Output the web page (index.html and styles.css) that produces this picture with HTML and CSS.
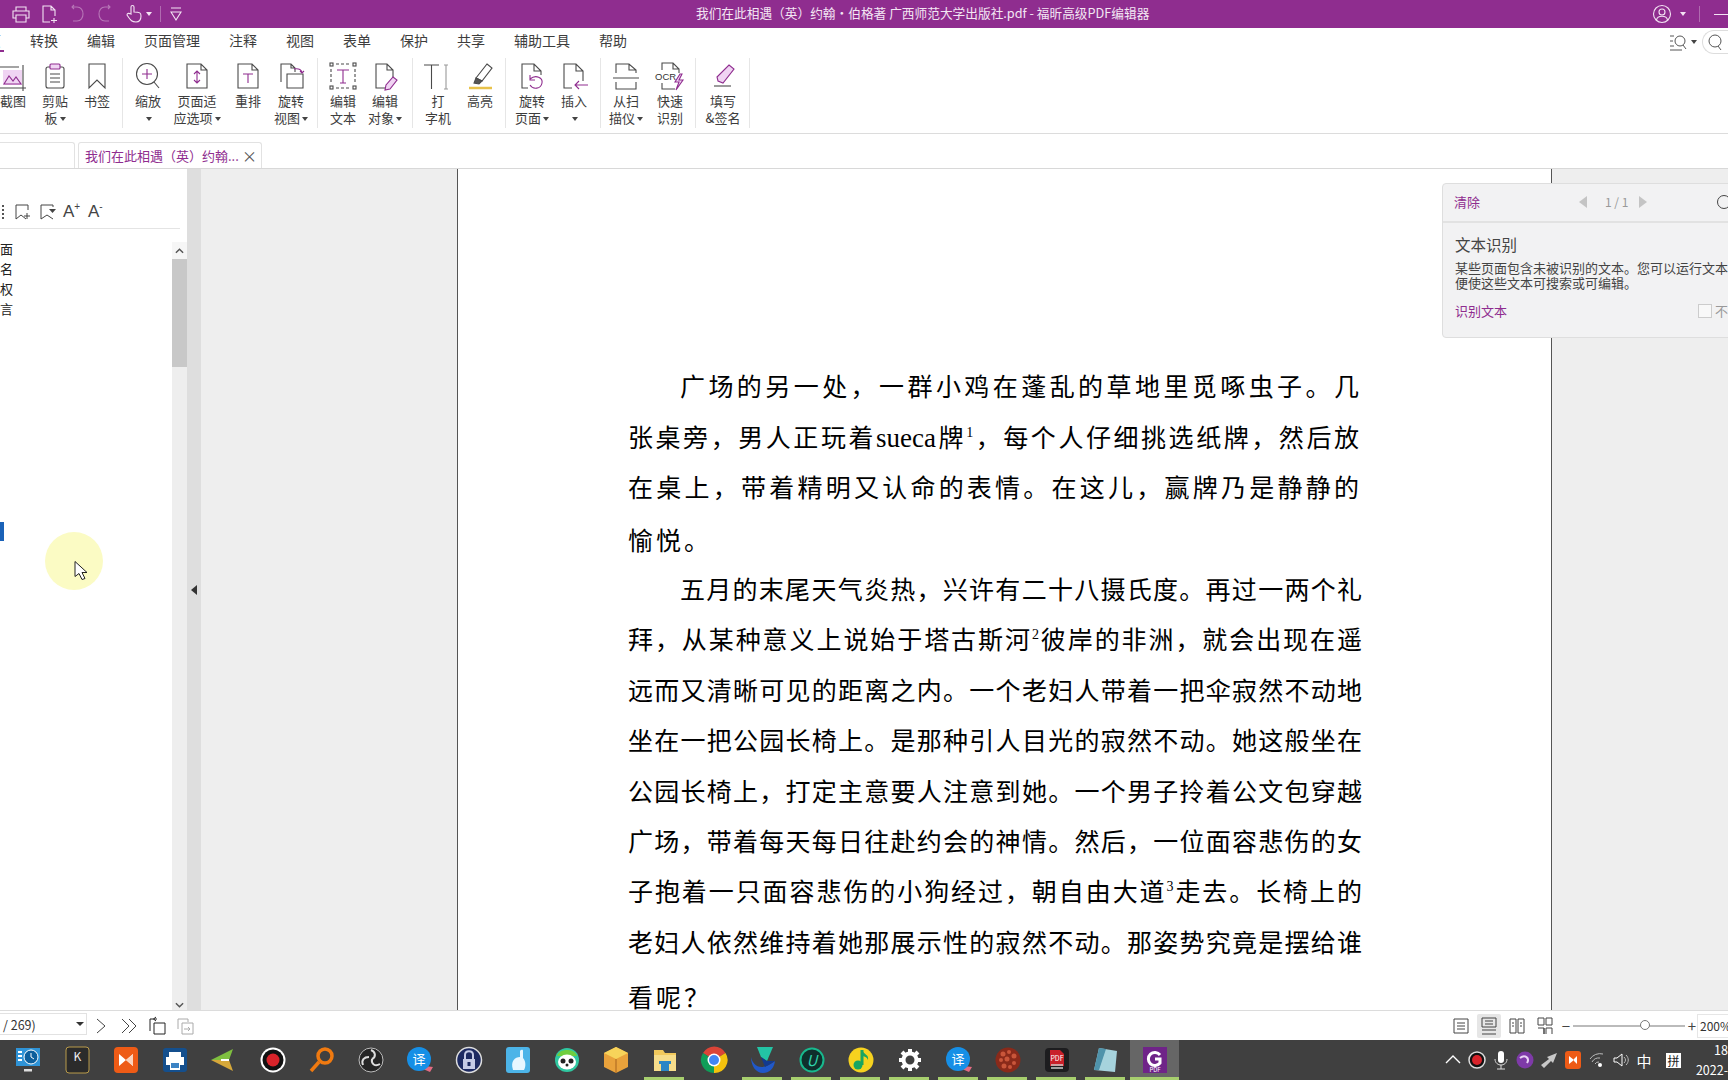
FILE: index.html
```html
<!DOCTYPE html>
<html lang="zh-CN">
<head>
<meta charset="utf-8">
<title>福昕高级PDF编辑器</title>
<link rel="stylesheet" href="styles.css">
</head>
<body>
<svg class="defs" aria-hidden="true">
  <symbol id="i-shot" viewBox="0 0 32 32"><path class="pf" d="M6 10h19v15H6z" stroke="none"/><path class="ps" d="M7 24l5-8 4 5 3-4 5 7z"/><path d="M1 28h28M26 5v26M1 7h21"/></symbol>
  <symbol id="i-clip" viewBox="0 0 32 32"><rect x="7" y="7" width="18" height="21" rx="2"/><rect class="pf ps" x="11" y="4" width="10" height="5" rx="1"/><path d="M11 14h10M11 18h10M11 22h10"/></symbol>
  <symbol id="i-mark" viewBox="0 0 32 32"><path d="M8 4h16v24l-8-8-8 8z"/></symbol>
  <symbol id="i-zoom" viewBox="0 0 32 32"><circle cx="15" cy="14" r="10.5"/><path d="M22 22l5 6"/><path class="ps" d="M15 9v10M10 14h10"/></symbol>
  <symbol id="i-fit" viewBox="0 0 32 32"><path d="M6 4h14l6 6v18H6zM20 4v6h6"/><path class="ps" d="M16 11v12M13 14l3-3 3 3M13 20l3 3 3-3"/></symbol>
  <symbol id="i-reflow" viewBox="0 0 32 32"><path d="M6 4h14l6 6v18H6zM20 4v6h6"/><path class="ps" d="M11 14h10M16 14v9"/></symbol>
  <symbol id="i-rotview" viewBox="0 0 32 32"><path d="M6 22V4h10l4 4v4M16 4v4h4"/><path d="M12 14h16v14H12z"/><path class="ps" d="M19 9c5-1 8 1 8 4M25 11l2 2 2-2"/></symbol>
  <symbol id="i-edittext" viewBox="0 0 32 32"><path d="M9 4h14M9 28h14M4 9v14M28 9v14" stroke-dasharray="3 2"/><rect x="3" y="3" width="3" height="3"/><rect x="26" y="3" width="3" height="3"/><rect x="3" y="26" width="3" height="3"/><rect x="26" y="26" width="3" height="3"/><path class="ps" d="M10 10h12M16 10v13M13 23h6"/></symbol>
  <symbol id="i-editobj" viewBox="0 0 32 32"><path d="M19 28H7V4h11l6 6v7M18 4v6h6"/><path class="pf ps" d="M24 17l4 3-7 9-5 1 1-5z"/></symbol>
  <symbol id="i-type" viewBox="0 0 32 32"><path d="M2 5h15M9.500 5v24"/><path class="soft" d="M24 5v24M22 5h4M22 29h4"/></symbol>
  <symbol id="i-high" viewBox="0 0 32 32"><path d="M23 4l5 4-10 13-6-3z"/><path class="dark" d="M12 18l6 3-3 3-5-1z"/><path class="yel" d="M5 28h23"/></symbol>
  <symbol id="i-rotpage" viewBox="0 0 32 32"><path d="M12 28H6V4h12l7 7v4M18 4v7h7"/><path class="ps" d="M14 19c6-5 13-1 12 4-1 6-9 7-12 2M14 15v5h5"/></symbol>
  <symbol id="i-insert" viewBox="0 0 32 32"><path d="M14 28H6V4h12l7 7v10M18 4v7h7"/><path class="ps" d="M30 25H17M21 21l-4 4 4 4"/></symbol>
  <symbol id="i-scan" viewBox="0 0 32 32"><path d="M6 13V4h13l7 6v3M19 4v6h7M3 18h26M6 22v7h20v-7"/></symbol>
  <symbol id="i-ocr" viewBox="0 0 32 32"><path d="M8 10V3h11l6 6v4M19 3v6h6M8 23v6h13"/><text class="ocr-text" x="1" y="20">OCR</text><path class="pf ps" d="M26 14l-5 8h4l-3 8 7-10h-4l3-6z"/></symbol>
  <symbol id="i-sign" viewBox="0 0 32 32"><path class="pf ps" d="M22 5l5 4-11 14-5-2-1-4z"/><path d="M7 26h17"/></symbol>
  <symbol id="s-bm-add" viewBox="0 0 20 20"><path d="M13 17l-5-4-5 4V3h12v5M14 11v6M11 14h6"/></symbol>
  <symbol id="s-bm-down" viewBox="0 0 20 20"><path d="M15 17l-6-4-6 4V3h12v2"/><path class="solid" d="M11 7h7l-3.500 4z"/></symbol>
</svg>

<div class="app">
  <header class="titlebar">
    <div class="quick">
      <svg class="qi" viewBox="0 0 20 20"><path d="M5 7V3h10v4M5 14H2V7h16v7h-3M5 11h10v7H5z"/></svg>
      <svg class="qi" viewBox="0 0 20 20"><path d="M11 18H4V2h8l4 4v6M12 2v4h4M15 14v5M12 16.500h6"/></svg>
      <svg class="qi qi-off" viewBox="0 0 20 20"><path d="M5 3h5c8 0 8 14 0 14H6M7 1L5 3l2 2"/></svg>
      <svg class="qi qi-off" viewBox="0 0 20 20"><path d="M15 3h-5c-8 0-8 14 0 14h4M13 1l2 2-2 2"/></svg>
      <svg class="qi" viewBox="0 0 20 20"><path d="M8 10V3c0-2 3-2 3 0v5c6 0 7 1 7 4 0 5-2 6-5 6-4 0-5-1-9-7 0-2 2-2 4-1z"/></svg>
      <i class="caret caret-white"></i>
      <span class="qsep"></span>
      <svg class="qi qi-drop" viewBox="0 0 20 20"><path d="M5 4h10M5 8l5 8 5-8z"/></svg>
    </div>
    <div class="wintitle">我们在此相遇（英）约翰·伯格著 广西师范大学出版社.pdf - 福昕高级PDF编辑器</div>
    <div class="winctl">
      <svg class="qi qi-user" viewBox="0 0 20 20"><circle cx="10" cy="10" r="8.500"/><circle cx="10" cy="8" r="3"/><path d="M4.500 16c1-5 10-5 11 0"/></svg>
      <i class="caret caret-white"></i>
      <span class="qsep qsep-right"></span>
      <span class="minbar"></span>
    </div>
  </header>

  <nav class="menu">
    <span class="menu-home">主页</span>
    <span>转换</span><span>编辑</span><span>页面管理</span><span>注释</span><span>视图</span><span>表单</span><span>保护</span><span>共享</span><span>辅助工具</span><span>帮助</span>
    <div class="menu-search">
      <svg class="find" viewBox="0 0 20 20"><path d="M1 4h4M1 9h3M1 14h4M1 18h12"/><circle cx="11" cy="9" r="5"/><path d="M14 13l3 4"/></svg>
      <i class="caret"></i>
      <div class="pill"><svg class="find" viewBox="0 0 20 20"><circle cx="10" cy="9" r="6"/><path d="M13 14l3 4"/></svg></div>
    </div>
  </nav>

  <section class="ribbon">
    <div class="group g1">
      <div class="tool"><svg class="ico"><use href="#i-shot"/></svg><span class="label">截图</span></div>
      <div class="tool"><svg class="ico"><use href="#i-clip"/></svg><span class="label">剪贴<br>板<i class="caret"></i></span></div>
      <div class="tool"><svg class="ico"><use href="#i-mark"/></svg><span class="label">书签</span></div>
    </div>
    <div class="group g2">
      <div class="tool"><svg class="ico"><use href="#i-zoom"/></svg><span class="label">缩放<br><i class="caret"></i></span></div>
      <div class="tool"><svg class="ico"><use href="#i-fit"/></svg><span class="label">页面适<br>应选项<i class="caret"></i></span></div>
      <div class="tool"><svg class="ico"><use href="#i-reflow"/></svg><span class="label">重排</span></div>
      <div class="tool"><svg class="ico"><use href="#i-rotview"/></svg><span class="label">旋转<br>视图<i class="caret"></i></span></div>
    </div>
    <div class="group g3">
      <div class="tool"><svg class="ico"><use href="#i-edittext"/></svg><span class="label">编辑<br>文本</span></div>
      <div class="tool"><svg class="ico"><use href="#i-editobj"/></svg><span class="label">编辑<br>对象<i class="caret"></i></span></div>
    </div>
    <div class="group g4">
      <div class="tool"><svg class="ico"><use href="#i-type"/></svg><span class="label">打<br>字机</span></div>
      <div class="tool"><svg class="ico"><use href="#i-high"/></svg><span class="label">高亮</span></div>
    </div>
    <div class="group g5">
      <div class="tool"><svg class="ico"><use href="#i-rotpage"/></svg><span class="label">旋转<br>页面<i class="caret"></i></span></div>
      <div class="tool"><svg class="ico"><use href="#i-insert"/></svg><span class="label">插入<br><i class="caret"></i></span></div>
    </div>
    <div class="group g6">
      <div class="tool"><svg class="ico"><use href="#i-scan"/></svg><span class="label">从扫<br>描仪<i class="caret"></i></span></div>
      <div class="tool"><svg class="ico"><use href="#i-ocr"/></svg><span class="label">快速<br>识别</span></div>
    </div>
    <div class="group g7">
      <div class="tool"><svg class="ico"><use href="#i-sign"/></svg><span class="label">填写<br>&amp;签名</span></div>
    </div>
  </section>

  <div class="tabs">
    <div class="tab tab-prev"></div>
    <div class="tab tab-active"><span>我们在此相遇（英）约翰...</span><span class="tab-x">×</span></div>
  </div>

  <main class="main">
    <aside class="sidebar">
      <div class="side-tools">
        <span class="side-cut"></span>
        <svg class="sico"><use href="#s-bm-add"/></svg>
        <svg class="sico"><use href="#s-bm-down"/></svg>
        <span class="font-btn">A<sup>+</sup></span>
        <span class="font-btn">A<sup>-</sup></span>
      </div>
      <div class="side-body">
        <div class="tree">
          <div class="tree-row">面</div>
          <div class="tree-row">名</div>
          <div class="tree-row">权</div>
          <div class="tree-row">言</div>
          <div class="tree-mark"></div>
        </div>
        <div class="scroll">
          <div class="scroll-btn">
            <svg class="chev" viewBox="0 0 10 6"><path d="M1 5l4-4 4 4"/></svg>
          </div>
          <div class="scroll-thumb"></div>
          <div class="scroll-track"></div>
          <div class="scroll-btn scroll-btn-end">
            <svg class="chev" viewBox="0 0 10 6"><path d="M1 1l4 4 4-4"/></svg>
          </div>
        </div>
      </div>
      <div class="pointer-glow"></div>
      <svg class="pointer" viewBox="0 0 14 20"><path d="M1 1v15l4-3 3 6 3-1-3-6h5z"/></svg>
    </aside>
    <div class="collapse"><i class="collapse-arrow"></i></div>
    <div class="gutter"></div>
    <article class="page">
      <div class="para">
        <p class="line indent">广场的另一处，一群小鸡在蓬乱的草地里觅啄虫子。几</p>
        <p class="line">张桌旁，男人正玩着<span class="latin">sueca</span>牌<sup class="note">1</sup>，每个人仔细挑选纸牌，然后放</p>
        <p class="line">在桌上，带着精明又认命的表情。在这儿，赢牌乃是静静的</p>
        <p class="line line-end drop-3">愉悦。</p>
      </div>
      <div class="para para-wide">
        <p class="line indent">五月的末尾天气炎热，兴许有二十八摄氏度。再过一两个礼</p>
        <p class="line">拜，从某种意义上说始于塔古斯河<sup class="note">2</sup>彼岸的非洲，就会出现在遥</p>
        <p class="line">远而又清晰可见的距离之内。一个老妇人带着一把伞寂然不动地</p>
        <p class="line">坐在一把公园长椅上。是那种引人目光的寂然不动。她这般坐在</p>
        <p class="line">公园长椅上，打定主意要人注意到她。一个男子拎着公文包穿越</p>
        <p class="line">广场，带着每天每日往赴约会的神情。然后，一位面容悲伤的女</p>
        <p class="line">子抱着一只面容悲伤的小狗经过，朝自由大道<sup class="note">3</sup>走去。长椅上的</p>
        <p class="line">老妇人依然维持着她那展示性的寂然不动。那姿势究竟是摆给谁</p>
        <p class="line line-end drop-5">看呢？</p>
      </div>
    </article>
    <div class="outside"></div>
    <div class="notice">
      <div class="notice-head">
        <span class="link">清除</span>
        <i class="tri tri-l"></i>
        <span class="count">1 / 1</span>
        <i class="tri tri-r"></i>
        <span class="notice-close"></span>
      </div>
      <div class="notice-body">
        <h3 class="notice-title">文本识别</h3>
        <p class="notice-text">某些页面包含未被识别的文本。您可以运行文本识别，<br>便使这些文本可搜索或可编辑。</p>
        <div class="notice-foot">
          <span class="link">识别文本</span>
          <span class="check-box"></span><span class="check-text">不再显示</span>
        </div>
      </div>
    </div>
  </main>

  <footer class="status">
    <div class="pagebox"><span>/ 269)</span><i class="caret caret-dark"></i></div>
    <svg class="nav nav-next" viewBox="0 0 20 20"><path d="M6 3l8 7-8 7"/></svg>
    <svg class="nav" viewBox="0 0 20 20"><path d="M3 3l7 7-7 7M10 3l7 7-7 7"/></svg>
    <svg class="nav nav-big" viewBox="0 0 20 20"><path d="M2 15V3h7M8 1L5.500 3 8 5M6 7h11v11H6z"/></svg>
    <svg class="nav nav-off" viewBox="0 0 20 20"><path d="M2 13V3h10v3M6 7h11v11H6zM8 13h6M12 11l2 2-2 2"/></svg>
    <div class="views">
      <span class="view"><svg class="vico" viewBox="0 0 18 18"><path d="M2 2h14v14H2zM5 6h8M5 9h8M5 12h8"/></svg></span>
      <span class="view view-on"><svg class="vico" viewBox="0 0 18 18"><path d="M2 1h14v9H2zM5 4h8M5 7h8M2 13h14M2 17h14"/></svg></span>
      <span class="view"><svg class="vico" viewBox="0 0 18 18"><path d="M2 2h6v14H2zM10 2h6v14h-6zM4 6h2M4 9h2M12 6h2M12 9h2"/></svg></span>
      <span class="view"><svg class="vico" viewBox="0 0 18 18"><path d="M2 1h6v7H2zM10 1h6v7h-6zM2 11h6v6M8 11v6M10 11h6M10 11v6M16 11v6"/></svg></span>
    </div>
    <div class="zoomer">
      <span class="zoom-sign">−</span>
      <div class="slider"><span class="knob"></span></div>
      <span class="zoom-sign">+</span>
      <span class="zoom-value">200%</span>
    </div>
  </footer>

  <div class="taskbar">
    <div class="apps">
      <div class="app-item"><svg class="tb" viewBox="0 0 28 28"><rect x="2" y="2" width="24" height="18" fill="#2f93d6"/><circle cx="17" cy="11" r="7" fill="#0d5f9c" stroke="#fff"/><path d="M17 7v4l3 2" stroke="#fff" fill="none"/><path d="M4 6h4M4 10h4M4 14h4" stroke="#fff" stroke-width="2"/><rect x="10" y="23" width="8" height="2.500" fill="#ddd"/></svg></div>
      <div class="app-item"><svg class="tb" viewBox="0 0 28 28"><rect x="3" y="1" width="23" height="26" rx="3" fill="#2b2b2b" stroke="#b99b4b"/><text class="tb-text" x="14.500" y="15" fill="#eee" text-anchor="middle" font-size="12">K</text></svg></div>
      <div class="app-item"><svg class="tb" viewBox="0 0 28 28"><rect x="2" y="1" width="24" height="26" rx="4" fill="#ee5b16"/><path d="M7 8l7 6-7 6zM21 8l-7 6 7 6z" fill="#fff"/><path d="M21 8l-7 6 7 6z" fill="#fbd2bb"/></svg></div>
      <div class="app-item"><svg class="tb" viewBox="0 0 28 28"><rect x="2" y="2" width="24" height="24" rx="3" fill="#144f8d"/><path d="M8 6h12v5H8zM5 11h18v8h-4v5H9v-5H5z" fill="#fff"/><path d="M10 17h8v5h-8z" fill="#3b83c4"/></svg></div>
      <div class="app-item"><svg class="tb" viewBox="0 0 28 28"><path d="M1 14L23 3l-4 11z" fill="#7fbf3f"/><path d="M1 14l22 11-4-11z" fill="#d6a83a"/><path d="M11 14h8" stroke="#fff" stroke-width="2"/></svg></div>
      <div class="app-item"><svg class="tb" viewBox="0 0 28 28"><circle cx="14" cy="14" r="12.500" fill="#fff"/><circle cx="14" cy="14" r="10.500" fill="#111"/><circle cx="14" cy="14" r="6.500" fill="#d8232a"/></svg></div>
      <div class="app-item"><svg class="tb" viewBox="0 0 28 28"><circle cx="17" cy="10" r="7" fill="none" stroke="#f07a10" stroke-width="3.500"/><path d="M11 16l-8 9" stroke="#f07a10" stroke-width="3.500"/></svg></div>
      <div class="app-item"><svg class="tb" viewBox="0 0 28 28"><circle cx="14" cy="14" r="12" fill="#252525" stroke="#bbb"/><path d="M14 4c5 2 5 7 1 9M23 18c-5 3-9 0-8-5M6 19c-2-5 1-8 6-8" fill="none" stroke="#ddd" stroke-width="2"/></svg></div>
      <div class="app-item"><svg class="tb" viewBox="0 0 28 28"><path d="M19 20l8 1-3 5-7-3z" fill="#e46b82"/><circle cx="13" cy="13" r="12" fill="#168fe6"/><text class="tb-text" x="13" y="18" fill="#fff" text-anchor="middle" font-size="13">译</text></svg></div>
      <div class="app-item"><svg class="tb" viewBox="0 0 28 28"><circle cx="14" cy="14" r="12.500" fill="#1d2a62" stroke="#ddd" stroke-width="1.500"/><rect x="8" y="13" width="12" height="10" fill="#c5cbe6"/><path d="M10 13V9c0-5 8-5 8 0v4" fill="none" stroke="#c5cbe6" stroke-width="2"/><rect x="12.500" y="16" width="3" height="4" fill="#1d2a62"/></svg></div>
      <div class="app-item"><svg class="tb" viewBox="0 0 28 28"><rect x="2" y="1" width="24" height="26" rx="3" fill="#4cb4e8"/><path d="M9 24c-3-9 2-13 7-13V5c2-2 3-1 3 0v7c3 3 3 9 1 12z" fill="#e8f7ff"/></svg></div>
      <div class="app-item"><svg class="tb" viewBox="0 0 28 28"><circle cx="14" cy="14" r="12" fill="#2fc7a0"/><path d="M4 10C6 2 22 2 24 10z" fill="#6fcf3f"/><ellipse cx="14" cy="16" rx="9" ry="7.500" fill="#fff"/><circle cx="10" cy="15" r="2.500" fill="#222"/><circle cx="18" cy="15" r="2.500" fill="#222"/><circle cx="14" cy="19" r="1.500" fill="#222"/></svg></div>
      <div class="app-item"><svg class="tb" viewBox="0 0 28 28"><path d="M14 1l12 6v14l-12 6-12-6V7z" fill="#e9a23b"/><path d="M2 7l12 6 12-6-12-6z" fill="#f7d35a"/><path d="M14 13v14" stroke="#a8651f"/></svg></div>
      <div class="app-item run"><svg class="tb" viewBox="0 0 28 28"><path d="M3 4h9l2 3h11v18H3z" fill="#f2c95c"/><path d="M3 9h22v16H3z" fill="#f7dd8a"/><path d="M10 18h8v7h-8z" fill="#2b86c5"/><path d="M8 15h12v3H8z" fill="#2b86c5"/></svg></div>
      <div class="app-item"><svg class="tb" viewBox="0 0 28 28"><path d="M14 14L3 7a13 13 0 0 1 22.500 0z" fill="#db4437"/><path d="M14 14l11.500-7A13 13 0 0 1 14 27z" fill="#f4c20d"/><path d="M14 27A13 13 0 0 1 3 7l11 7z" fill="#0f9d58"/><circle cx="14" cy="14" r="6.500" fill="#fff"/><circle cx="14" cy="14" r="5" fill="#4285f4"/></svg></div>
      <div class="app-item run"><svg class="tb" viewBox="0 0 28 28"><path d="M2 11c2 9 10 15 24 4-1 8-6 12-12 12C7 27 2 20 2 11z" fill="#2058c9"/><path d="M8 1h16l-6 14-6-4z" fill="#23c4a5"/><path d="M12 11l6 4 8 0-10 6z" fill="#123a8f"/></svg></div>
      <div class="app-item run"><svg class="tb" viewBox="0 0 28 28"><circle cx="14" cy="14" r="11.500" fill="#0f2f2c" stroke="#18b98e" stroke-width="2"/><text class="tb-text tb-italic" x="14" y="19.500" fill="#2fd3aa" text-anchor="middle" font-size="15">U</text></svg></div>
      <div class="app-item run"><svg class="tb" viewBox="0 0 28 28"><circle cx="14" cy="14" r="12.500" fill="#f6d21f"/><path d="M15 4v15" stroke="#19a561" stroke-width="3"/><circle cx="11" cy="19" r="4.500" fill="#19a561"/><path d="M15 4c2 5 7 4 6 10-1-3-4-4-6-4z" fill="#19a561"/></svg></div>
      <div class="app-item run"><svg class="tb" viewBox="0 0 28 28"><circle cx="14" cy="14" r="6.500" fill="none" stroke="#fff" stroke-width="4"/><path d="M14 3v5M14 20v5M3 14h5M20 14h5M6 6l3.500 3.500M18.500 18.500L22 22M22 6l-3.500 3.500M9.500 18.500L6 22" stroke="#fff" stroke-width="4"/></svg></div>
      <div class="app-item run"><svg class="tb" viewBox="0 0 28 28"><path d="M19 20l8 1-3 5-7-3z" fill="#e46b82"/><circle cx="13" cy="13" r="12" fill="#168fe6"/><text class="tb-text" x="13" y="18" fill="#fff" text-anchor="middle" font-size="13">译</text></svg></div>
      <div class="app-item run"><svg class="tb" viewBox="0 0 28 28"><circle cx="14" cy="14" r="12.500" fill="#8a2a1a"/><g fill="#c9563a"><circle cx="9" cy="8" r="2.500"/><circle cx="15" cy="6" r="2"/><circle cx="20" cy="10" r="2.500"/><circle cx="7" cy="14" r="2"/><circle cx="13" cy="13" r="2.500"/><circle cx="20" cy="17" r="2"/><circle cx="10" cy="20" r="2.500"/><circle cx="16" cy="21" r="2"/></g></svg></div>
      <div class="app-item run"><svg class="tb" viewBox="0 0 28 28"><rect x="2" y="2" width="24" height="24" rx="4" fill="#1d1d1f"/><path d="M7 4h10l4 4v12H7z" fill="#c8202a"/><text class="tb-text" x="14" y="15" fill="#fff" text-anchor="middle" font-size="7">PDF</text><path d="M8 19h12M8 22h12" stroke="#ccc" stroke-width="1.500"/></svg></div>
      <div class="app-item run"><svg class="tb" viewBox="0 0 28 28"><path d="M7 2l18 3-2 21-21-2z" fill="#a6d3dd"/><path d="M7 2l7 1-7 21-5 0z" fill="#4f93ab"/></svg></div>
      <div class="app-item run app-active"><svg class="tb" viewBox="0 0 28 28"><rect x="2" y="1" width="24" height="26" fill="#6f2488"/><path d="M19 9a6.500 6.500 0 1 0 0 8v-4h-5" fill="none" stroke="#fff" stroke-width="3"/><text class="tb-text" x="14" y="26" fill="#fff" text-anchor="middle" font-size="6">PDF</text></svg></div>
    </div>
    <div class="tray">
      <svg class="tr" viewBox="0 0 20 20"><path d="M3 13l7-7 7 7" fill="none" stroke="#fff" stroke-width="1.400"/></svg>
      <svg class="tr" viewBox="0 0 20 20"><circle cx="10" cy="10" r="8" fill="#111" stroke="#ddd" stroke-width="1.500"/><circle cx="10" cy="10" r="5" fill="#d8232a"/></svg>
      <svg class="tr" viewBox="0 0 20 20"><rect x="7" y="1" width="6" height="12" rx="3" fill="#fff"/><path d="M4 9c0 8 12 8 12 0M10 15v4M6 19h8" fill="none" stroke="#ddd"/></svg>
      <svg class="tr" viewBox="0 0 20 20"><circle cx="10" cy="10" r="8.500" fill="#7e3aa8"/><path d="M5 8c5-4 10 0 7 5" fill="none" stroke="#e9d3f5" stroke-width="2"/></svg>
      <svg class="tr" viewBox="0 0 20 20"><path d="M18 3L8 7l2 2-8 6 3 3 7-7 2 2z" fill="#c8c8c8"/></svg>
      <svg class="tr" viewBox="0 0 20 20"><rect x="2" y="1" width="16" height="18" rx="3" fill="#ee5b16"/><path d="M6 6l5 4-5 4zM14 6l-4 4 4 4z" fill="#fff"/></svg>
      <svg class="tr" viewBox="0 0 20 20"><g fill="none" stroke="#bbb"><path d="M3 9a12 12 0 0 1 13-5M5 12a8 8 0 0 1 8-4M8 14a4 4 0 0 1 4-2"/></g><circle cx="13" cy="15" r="2" fill="#fff"/></svg>
      <svg class="tr" viewBox="0 0 20 20"><path d="M3 8h3l5-4v12l-5-4H3z" fill="none" stroke="#fff"/><path d="M13 7c2 2 2 4 0 6M15 5c3 3 3 7 0 10" fill="none" stroke="#bbb"/></svg>
      <span class="ime">中</span>
      <span class="pinyin">拼</span>
      <div class="clock"><span>18</span><span>2022-</span></div>
    </div>
  </div>
</div>
</body>
</html>
```
FILE: styles.css
```css
* { box-sizing: border-box; }
html, body { margin: 0; height: 100%; overflow: hidden; background: #fff; }
body { font-family: "Noto Sans CJK SC", "Noto Sans", sans-serif; color: #333; }
p, h3 { margin: 0; font-weight: 400; }
i { font-style: normal; }
.defs { position: absolute; width: 0; height: 0; }

.app { display: grid; grid-template-rows: 28px 28px 78px 35px 841px 30px 40px; width: 1728px; height: 1080px; overflow: hidden; }

/* title bar */
.titlebar { display: flex; align-items: center; background: #8f2d8f; color: #f3e6f3; padding-left: 11px; overflow: hidden; }
.quick { display: flex; align-items: center; gap: 8px; }
.qi { width: 20px; height: 20px; fill: none; stroke: #f3e3f3; stroke-width: 1.1; flex: none; }
.qi-off { opacity: .4; }
.qi-drop { margin-left: -3px; }
.caret { display: inline-block; width: 0; height: 0; border-left: 3px solid transparent; border-right: 3px solid transparent; border-top: 4px solid #444; margin-left: 2px; vertical-align: middle; }
.caret-white { border-top-color: #f3e3f3; margin-left: -5px; }
.qsep { width: 1px; height: 16px; background: #b06bb0; margin-left: 0; }
.wintitle { margin-left: 510px; padding-bottom: 3px; font-size: 12.7px; white-space: nowrap; }
.winctl { display: flex; align-items: center; margin-left: auto; gap: 9px; padding-right: 0; width: 76px; flex: none; }
.winctl .caret-white { margin-left: -1px; }
.qsep-right { margin-left: 4px; }
.minbar { width: 14px; height: 1px; background: #f3e3f3; margin-left: 5px; }

/* menu */
.menu { display: flex; align-items: center; gap: 29px; padding-bottom: 5px; font-size: 14px; color: #3d3d3d; white-space: nowrap; overflow: hidden; }
.menu-home { margin-left: -27px; margin-right: -3px; padding-right: 3px; border-bottom: 2px solid #8f2d8f; line-height: 20px; margin-top: 2px; }
.menu-search { display: flex; align-items: center; margin-left: auto; margin-top: 5px; }
.find { width: 20px; height: 20px; fill: none; stroke: #555; stroke-width: 1; }
.pill { margin-left: 5px; width: 26px; height: 24px; border: 1px solid #ddd; border-right: none; border-radius: 12px 0 0 12px; padding: 1px 2px; }

/* ribbon */
.ribbon { display: flex; align-items: flex-start; padding-top: 2px; border-bottom: 1px solid #dcdcdc; overflow: hidden; }
.group { display: grid; height: 70px; border-right: 1px solid #e6e6e6; flex: none; }
.g1 { grid-template-columns: 42px 42px 42px; width: 131px; margin-left: -8px; }
.g2 { grid-template-columns: 50px 48px 54px 32px; width: 195px; }
.g3 { grid-template-columns: 50px 34px; width: 95px; }
.g4 { grid-template-columns: 50px 34px; width: 93px; }
.g5 { grid-template-columns: 52px 32px; width: 95px; }
.g6 { grid-template-columns: 50px 38px; width: 95px; }
.g7 { grid-template-columns: 54px; width: 54px; }
.tool { display: flex; flex-direction: column; align-items: center; min-width: 0; }
.ico { width: 32px; height: 32px; margin-top: 2px; margin-bottom: 1px; fill: none; stroke: #4a4a4a; stroke-width: 1.1; flex: none; overflow: visible; }
.ps { stroke: #8f2d8f; }
.pf { fill: #f0d4f3; }
.soft { stroke: #9a9a9a; }
.dark { fill: #555; }
.yel { stroke: #e8c24a; stroke-width: 2.5; }
.solid { fill: #444; stroke: none; }
.ocr-text { font-size: 9.5px; fill: #333; stroke: none; font-family: "Liberation Sans", sans-serif; }
.label { font-size: 13px; line-height: 16.5px; text-align: center; white-space: nowrap; color: #3d3d3d; }

/* tabs */
.tabs { display: flex; align-items: flex-end; gap: 3px; border-bottom: 1px solid #d8d8d8; overflow: hidden; }
.tab { height: 26px; border: 1px solid #e2e2e2; border-bottom: none; border-radius: 3px 3px 0 0; }
.tab-prev { width: 80px; margin-left: -5px; }
.tab-active { display: flex; align-items: center; width: 184px; padding-left: 6px; font-size: 13px; color: #8f2d8f; white-space: nowrap; }
.tab-x { margin-left: auto; margin-right: 4px; color: #555; font-size: 15px; line-height: 1; }

/* main */
.main { position: relative; display: grid; grid-template-columns: 187px 14px 256px 1095px 1fr; overflow: hidden; background: #eee; }
.sidebar { position: relative; display: flex; flex-direction: column; background: #fff; }
.side-tools { display: flex; align-items: center; gap: 5px; width: 180px; height: 60px; padding-top: 27px; border-bottom: 1px solid #e4e4e4; color: #444; flex: none; }
.side-cut { width: 4px; height: 14px; margin-right: 4px; border-right: 2px dotted #555; }
.sico { width: 20px; height: 20px; fill: none; stroke: #444; stroke-width: 1; }
.font-btn { font-size: 17px; line-height: 20px; width: 20px; font-family: "Liberation Sans", sans-serif; color: #444; }
.font-btn sup { font-size: 10px; line-height: 0; }
.side-body { flex: 1; display: flex; margin-top: 10px; min-height: 0; }
.tree { flex: 1; font-size: 13px; color: #222; }
.tree-row { height: 20px; line-height: 20px; }
.tree-mark { width: 4px; height: 19px; margin-top: 203px; background: #1a62b8; }
.scroll { width: 15px; margin-top: 3px; display: flex; flex-direction: column; background: #eee; }
.scroll-btn { height: 17px; background: #f6f6f6; display: flex; align-items: center; justify-content: center; flex: none; }
.scroll-btn-end { height: 10px; background: #eee; }
.chev { width: 9px; height: 6px; fill: none; stroke: #555; stroke-width: 1.6; }
.scroll-thumb { height: 108px; background: #c8c8c8; flex: none; }
.scroll-track { flex: 1; }
.pointer-glow { position: absolute; left: 45px; top: 363px; width: 58px; height: 58px; border-radius: 50%; background: #fbfbc4; }
.pointer { position: absolute; left: 74px; top: 391px; width: 14px; height: 21px; fill: #fff; stroke: #222; stroke-width: 1; }
.collapse { background: #dedede; display: flex; align-items: center; justify-content: center; }
.collapse-arrow { width: 0; height: 0; border-top: 5px solid transparent; border-bottom: 5px solid transparent; border-right: 6px solid #333; }
.gutter { background: #eeeeee; }
.outside { background: #eeeeee; }

/* page */
.page { background: #fff; border-left: 1px solid #555; border-right: 1px solid #555; padding: 194px 0 0 170px; overflow: hidden; }
.para { width: 731px; }
.para-wide { width: 734px; }
.line { font-family: "Liberation Serif", "Noto Sans CJK SC", serif; font-size: 25px; line-height: 50.4px; height: 50.4px; color: #000; text-align: justify; text-align-last: justify; }
.indent { padding-left: 52px; }
.line-end { text-align-last: left; letter-spacing: 3px; }
.drop-3 { margin-top: 3px; margin-bottom: -1.5px; }
.drop-5 { margin-top: 5px; }
.note { font-size: 14px; line-height: 0; vertical-align: 10px; }
.latin { font-size: 27px; }

/* notice */
.notice { position: absolute; left: 1442px; top: 14px; width: 300px; height: 155px; background: #f2f2f3; border: 1px solid #dedede; border-radius: 4px; }
.notice-head { display: flex; align-items: center; height: 39px; padding-left: 11px; padding-bottom: 2px; border-bottom: 2px solid #e2e2e2; }
.notice-head > * { flex: none; }
.link { font-size: 13px; color: #8f2d8f; white-space: nowrap; flex: none; }
.tri { width: 0; height: 0; border-top: 6px solid transparent; border-bottom: 6px solid transparent; }
.tri-l { border-right: 8px solid #c4c4c4; margin-left: 99px; }
.tri-r { border-left: 8px solid #c4c4c4; }
.count { font-size: 12px; color: #999; margin: 0 11px 0 18px; white-space: nowrap; }
.notice-close { width: 14px; height: 14px; border: 1px solid #444; border-radius: 50%; margin-left: 70px; }
.notice-body { padding: 9px 12px 0; }
.notice-title { font-size: 15.5px; line-height: 24px; color: #444; }
.notice-text { font-size: 13px; line-height: 15px; color: #444; white-space: nowrap; margin-top: 4px; }
.notice-foot { display: flex; align-items: center; margin-top: 11px; }
.check-box { width: 14px; height: 14px; border: 1px solid #ccc; margin-left: 191px; background: #f8f8f8; flex: none; }
.check-text { font-size: 13px; color: #999; margin-left: 3px; white-space: nowrap; }

/* status */
.status { display: flex; align-items: center; border-top: 1px solid #dcdcdc; background: #fff; overflow: hidden; }
.pagebox { display: flex; align-items: center; justify-content: space-between; width: 87px; height: 22px; margin-top: -3px; border: 1px solid #e2e2e2; border-left: none; padding: 0 2px 0 3px; font-size: 12.5px; color: #333; flex: none; }
.caret-dark { border-top-color: #333; border-left-width: 4px; border-right-width: 4px; }
.nav { width: 20px; height: 20px; fill: none; stroke: #444; stroke-width: 1; margin-left: 8px; flex: none; }
.nav-next { margin-left: 4px; }
.nav-big { stroke: #222; margin-left: 9px; }
.nav-off { stroke: #aaa; }
.views { display: flex; gap: 4px; margin-left: auto; }
.view { display: flex; align-items: center; justify-content: center; width: 24px; height: 24px; border-radius: 2px; }
.view-on { background: #e6e6e6; }
.vico { width: 18px; height: 18px; fill: none; stroke: #444; stroke-width: 1; }
.zoomer { display: flex; align-items: center; margin-left: 4px; flex: none; }
.zoom-sign { font-size: 15px; color: #444; width: 10px; text-align: center; line-height: 1; }
.slider { position: relative; width: 112px; height: 2px; background: #bbb; margin: 0 2px; }
.knob { position: absolute; left: 67px; top: -5px; width: 10px; height: 10px; border: 1px solid #777; border-radius: 50%; background: #fff; }
.zoom-value { width: 31px; height: 24px; line-height: 22px; border: 1px solid #e6e6e6; border-right: none; font-size: 12px; padding-left: 2px; white-space: nowrap; overflow: hidden; }

/* taskbar */
.taskbar { display: flex; align-items: stretch; background: #404040; overflow: hidden; }
.apps { display: flex; margin-left: 3px; }
.app-item { position: relative; display: flex; align-items: center; justify-content: center; width: 49px; height: 40px; }
.tb { width: 28px; height: 28px; }
.tb-text { font-family: "Noto Sans CJK SC", sans-serif; }
.tb-italic { font-style: italic; }
.run::after { content: ""; position: absolute; left: 4px; right: 5px; bottom: 0; height: 3px; background: #a7cf6e; }
.app-active { background: #666; }
.app-active::after { left: 0; right: 0; }
.tray { display: flex; align-items: center; margin-left: auto; color: #fff; }
.tr { width: 20px; height: 20px; margin: 0 2px; flex: none; }
.ime { width: 22px; text-align: center; font-size: 15px; }
.pinyin { width: 15px; height: 15px; margin-left: 11px; background: #fff; color: #222; font-size: 12px; line-height: 15px; text-align: center; }
.clock { display: flex; flex-direction: column; align-items: flex-end; width: 30px; margin-left: 17px; font-size: 12.5px; line-height: 20px; white-space: nowrap; }
```
